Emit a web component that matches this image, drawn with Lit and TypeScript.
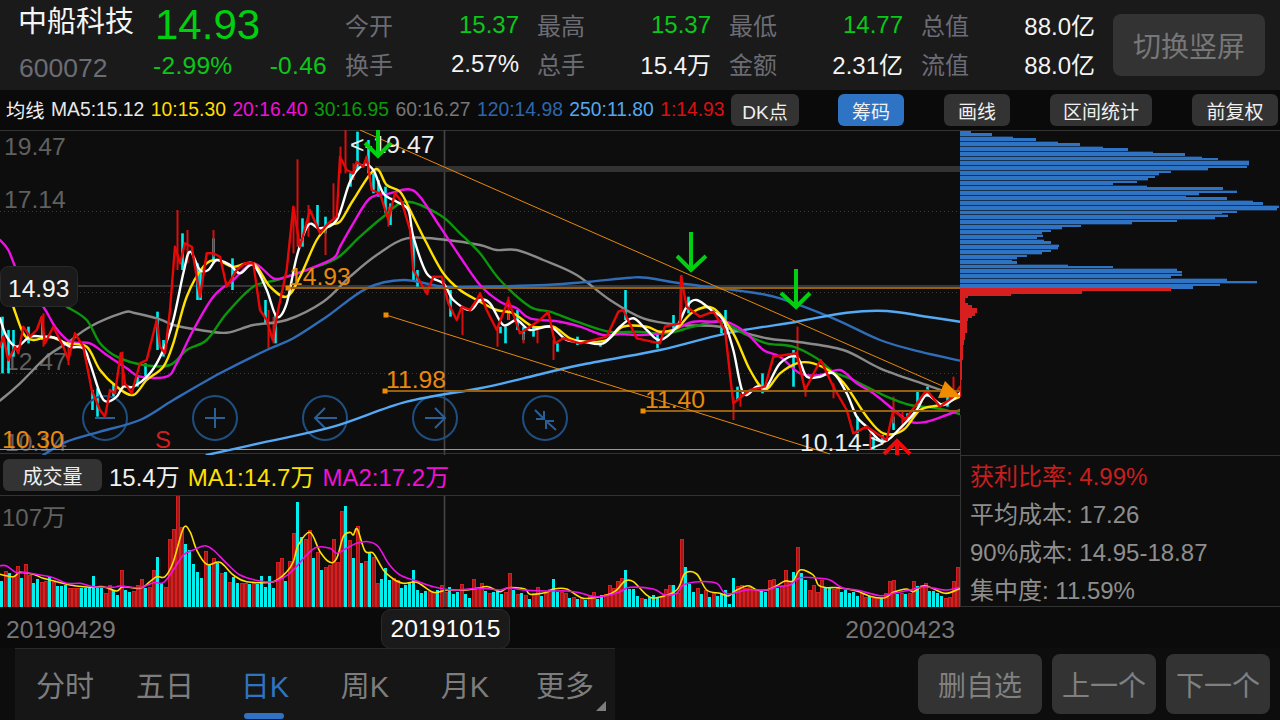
import { LitElement, html, css, svg, unsafeCSS } from "lit";
import { customElement } from "lit/decorators.js";

const FONT = unsafeCSS(`"Liberation Sans", "Noto Sans CJK SC", sans-serif`);

type P = [number, number];
const seg = (ox: number, oy: number, p: number[]): P[] => {
  const out: P[] = [];
  for (let i = 0; i < p.length; i += 2) out.push([ox + p[i] / 3, oy + p[i + 1] / 3]);
  return out;
};
const trace = (a: number[], b: number[], oy = 130): P[] => [...seg(0, oy, a), ...seg(480, oy, b)];
const jagged = (pts: P[]) => pts.map((p) => `${p[0].toFixed(1)},${p[1].toFixed(1)}`).join(" ");
// smooth moving-average curve through the traced points
const smooth = (pts: P[]) => {
  let d = `M${pts[0][0].toFixed(1)} ${pts[0][1].toFixed(1)}`;
  for (let i = 0; i < pts.length - 1; i++) {
    const p0 = pts[Math.max(0, i - 1)], p1 = pts[i], p2 = pts[i + 1], p3 = pts[Math.min(pts.length - 1, i + 2)];
    const c1x = p1[0] + (p2[0] - p0[0]) / 6, c1y = p1[1] + (p2[1] - p0[1]) / 6;
    const c2x = p2[0] - (p3[0] - p1[0]) / 6, c2y = p2[1] - (p3[1] - p1[1]) / 6;
    d += `C${c1x.toFixed(1)} ${c1y.toFixed(1)} ${c2x.toFixed(1)} ${c2y.toFixed(1)} ${p2[0].toFixed(1)} ${p2[1].toFixed(1)}`;
  }
  return d;
};

const MAGENTA = trace(
  [0,330,25,360,60,440,130,530,165,590,210,635,270,640,320,675,380,715,420,740,500,740,530,700,580,600,640,500,700,450,760,400,820,445,860,440,920,420,1000,385,1020,350,1060,280,1110,205,1170,190,1225,178,1260,200,1320,290,1380,380,1440,465],
  [60,515,110,535,150,565,240,575,300,590,370,615,420,612,480,615,540,610,590,595,640,575,700,575,740,575,800,610,850,660,900,680,960,730,1020,735,1080,720,1130,760,1180,790,1230,830,1290,875,1340,875,1400,855,1440,840]);
const WHITE = trace(
  [0,565,20,620,50,650,90,620,130,620,170,625,210,650,250,655,270,700,300,790,320,815,350,800,370,770,400,770,450,730,490,660,520,570,550,430,570,365,600,420,625,420,650,390,690,405,720,430,760,405,800,480,830,560,860,520,890,380,925,285,960,295,1010,270,1050,155,1090,105,1120,120,1150,190,1190,215,1225,240,1240,320,1280,430,1330,460,1360,510,1410,540,1440,510],
  [30,520,70,585,110,570,150,600,210,590,260,630,310,635,370,640,420,590,460,565,500,600,540,630,590,590,620,530,650,510,700,545,730,570,760,660,790,790,830,770,860,770,900,700,950,680,980,740,1020,740,1060,730,1100,790,1130,860,1160,890,1210,935,1260,895,1310,840,1340,795,1390,825,1440,790]);
const YELLOW = trace(
  [40,530,70,610,100,630,150,620,200,640,260,650,300,720,350,770,400,795,440,750,490,710,520,640,560,500,610,410,650,390,700,410,760,400,810,470,860,500,900,440,950,330,990,285,1020,275,1060,210,1125,118,1160,165,1200,185,1230,240,1280,340,1330,430,1380,480,1440,515],
  [50,540,100,550,160,590,220,590,270,625,320,635,380,630,430,590,500,590,540,605,590,595,640,545,700,535,760,610,810,720,855,778,900,730,950,700,1000,700,1060,730,1100,770,1160,860,1210,910,1270,900,1320,840,1380,825,1440,800]);
const GREEN = trace(
  [200,530,260,570,300,640,350,680,430,705,510,705,560,660,620,630,680,550,760,470,830,450,920,420,1010,385,1080,320,1150,260,1220,215,1320,255,1380,310,1440,370],
  [60,450,150,530,210,545,290,575,385,605,470,605,560,610,640,590,720,575,800,615,860,640,940,650,1010,685,1060,725,1120,750,1220,800,1290,825,1370,835,1440,852]);
const GRAY = trace(
  [0,812,60,760,140,680,200,640,270,590,370,548,400,548,480,568,520,585,600,600,680,608,760,585,860,570,970,515,1050,440,1130,375,1220,325,1340,330,1440,345],
  [50,360,110,360,190,390,290,435,390,510,490,565,600,585,720,590,860,625,950,635,1090,660,1200,715,1340,765,1440,800]);
const DBLUE = trace(
  [130,975,200,935,300,905,420,870,520,810,660,730,800,660,880,625,980,560,1100,475,1210,450,1330,470,1440,470],
  [200,465,330,455,450,443,500,443,600,460,800,485,900,505,1060,565,1200,630,1320,665,1440,692]);
const LBLUE = trace(
  [620,975,800,935,1000,890,1220,815,1440,775],
  [130,745,300,705,540,660,740,610,950,575,1100,548,1220,543,1340,560,1440,575]);
const RED = trace(
  [0,650,10,620,25,690,45,650,55,670,70,590,90,620,110,600,125,560,135,640,160,590,190,650,205,690,225,610,250,650,275,780,300,840,315,860,330,780,345,790,362,670,375,760,395,790,420,700,440,690,470,570,480,650,495,670,510,540,525,350,540,400,555,340,575,350,600,500,620,370,640,370,660,380,680,470,710,420,735,400,760,400,780,540,800,570,818,630,830,560,860,420,880,230,900,350,930,240,960,310,985,280,1010,260,1020,80,1040,120,1060,130,1070,95,1090,110,1100,80,1115,180,1140,190,1165,270,1185,190,1205,215,1230,300,1240,420,1280,490,1300,440,1325,440,1345,520,1370,570,1385,530,1410,540,1430,510,1440,490],
  [20,540,50,600,85,510,120,610,150,590,180,570,205,545,225,640,250,625,300,640,380,620,415,545,430,540,470,625,540,640,555,590,600,580,603,440,620,530,660,560,700,545,735,600,760,820,810,780,855,770,880,680,950,670,975,780,1022,690,1060,770,1100,840,1120,910,1160,890,1220,930,1240,840,1275,870,1340,780,1380,830,1420,800,1440,770]);

const CYAN_A = [5,560,730,25,600,730,40,600,680,85,590,640,125,570,630,275,780,840,290,775,860,340,760,800,410,740,770,435,700,740,470,545,660,490,630,680,545,310,420,590,400,510,600,420,510,640,325,400,695,385,480,795,510,580,825,555,640,905,265,350,950,225,290,975,260,310,1050,130,170,1070,5,120,1105,30,130,1120,130,190,1135,150,200,1155,170,250,1170,220,285,1240,320,450,1250,420,470,1350,480,560];
const CYAN_B = [60,590,610,75,590,640,85,540,570,110,540,600,130,590,630,160,590,620,230,640,665,290,620,645,360,640,650,435,480,570,530,610,655,580,555,600,625,500,550,735,540,610,722,570,610,770,770,810,845,730,790,940,660,770,1130,860,910,1180,920,960,1205,915,940,1240,860,900,1310,780,830,1340,770,800,1400,800,830,1280,850,870];
const WICK_A = [530,240,420,890,88,350,1035,0,130,365,665,780,805,540,655,820,560,640,975,300,375,1000,160,270,560,300,400,640,300,380,1385,530,615,1165,230,290,205,650,705,130,550,650,1280,470,495,880,230,370,925,225,320,1020,50,130,1060,100,150];
const WICK_B = [50,590,650,85,500,570,218,630,690,170,600,640,130,610,640,603,435,560,950,590,700,760,800,870,1060,760,805,1240,800,880,1265,840,900,1420,740,800,975,770,800,1170,900,960,780,790,830];

const sticks = (ox: number, p: number[], cls: string) => {
  const out = [];
  for (let i = 0; i < p.length; i += 3) {
    const x = Math.round(ox + p[i] / 3) + 0.5;
    out.push(svg`<line class=${cls} x1=${x} x2=${x} y1=${130 + p[i + 1] / 3} y2=${130 + p[i + 2] / 3}></line>`);
  }
  return out;
};

// volume bars: positive = red, negative = cyan, value = top in 3x zoom coordinates (base y 455)
const VOL = [
  -378,348,-355,362,332,-370,328,360,-384,-372,380,378,-365,382,-393,-393,-390,400,398,400,-400,-400,-400,-362,-395,-400,415,390,-405,-420,345,-405,-410,408,390,372,-400,395,345,-305,-385,395,252,222,120,215,-268,-285,-326,-350,-368,288,-328,308,-325,355,-350,380,-365,-384,385,385,-388,380,-388,-362,-395,-362,-400,322,308,-378,318,235,-140,-245,252,225,-308,290,-345,335,330,252,320,168,-153,255,-310,213,-325,318,-295,305,385,-372,-340,-375,370,375,-400,-390,-385,-345,-405,-415,-408,408,410,-405,390,410,-395,-418,-410,388,-418,-428,372,400,
  385,-408,415,-410,-405,-418,412,355,-405,418,-415,420,-432,415,397,-423,415,403,-372,-410,410,415,-430,425,-432,430,-435,420,412,-432,-420,418,390,400,378,370,-345,-402,-402,-423,430,-432,-425,-420,-430,425,402,390,-390,415,252,-336,-388,-412,400,-418,405,-425,415,-423,-418,-405,-447,-368,392,390,400,395,405,405,-405,-410,375,372,-398,392,345,378,-350,277,-353,-375,405,390,410,375,-400,-400,402,398,-410,-405,-413,-410,-422,415,425,-423,428,430,-430,415,378,375,-418,415,-417,415,378,-392,390,385,-408,-408,-415,-422,428,425,378,336];

const VY = trace(
  [0,358,40,365,60,352,100,358,130,370,170,380,210,390,270,397,310,395,350,408,370,395,420,400,450,380,470,365,495,365,520,320,550,220,570,230,590,285,620,328,660,322,700,360,740,380,820,380,860,350,880,320,895,270,930,232,960,290,990,322,1010,310,1030,245,1050,232,1060,240,1072,222,1095,288,1120,295,1150,345,1180,372,1210,385,1250,382,1300,412,1340,405,1400,405,1440,398],
  [25,395,60,410,85,398,135,402,150,418,200,412,220,402,260,402,310,430,380,420,410,405,435,378,460,380,500,420,530,428,590,405,615,355,650,357,680,405,720,415,745,423,770,405,805,392,830,405,860,405,890,392,915,378,940,378,960,345,1000,360,1015,390,1040,398,1075,398,1130,408,1175,425,1215,428,1240,412,1280,402,1300,410,1335,392,1395,415,1440,400],
  455);
const VM = trace(
  [0,332,20,333,50,353,80,353,120,360,160,368,200,385,240,385,280,395,340,397,360,393,420,398,460,383,490,383,520,345,550,300,580,285,615,272,640,285,680,325,720,360,780,378,820,380,850,368,880,345,920,300,950,277,990,280,1010,295,1040,280,1070,265,1105,260,1135,275,1165,325,1200,360,1250,378,1300,395,1360,405,1440,400],
  [60,405,85,398,130,405,200,408,260,408,300,413,340,425,380,422,420,410,450,397,520,402,555,420,590,415,610,390,660,380,710,385,730,410,750,417,800,405,860,405,890,395,930,390,960,368,1020,370,1050,375,1090,400,1130,405,1200,422,1240,415,1290,405,1335,395,1395,405,1440,397],
  455);

// chip distribution: row width in 3x zoom px
const ROW = 2.455;
const CHIP_BLUE = [32,95,160,228,293,360,430,503,578,675,725,773,866,866,860,745,632,598,585,565,530,460,560,790,830,717,678,802,880,910,957,950,830,787,805,765,652,515,362,307,273,245,248,232,252,272,296,293,272,245,200,170,157,170,325,458,650,665,667,633,802,890,780,700];
const CHIP_RED = [632,366,153,25,15,15,23,36,50,52,46,35,25,20,20,20,22,20,16,14,14,12,12,10,10,10,8,8,8,7,7,6,6,6,5,5,5,4,4,4,3,3,3,2];

const tickers = [
  ["MA5:15.12", "#e8e8e8"], ["10:15.30", "#ffdd00"], ["20:16.40", "#f010d8"], ["30:16.95", "#0b9a0b"],
  ["60:16.27", "#777777"], ["120:14.98", "#2d66ad"], ["250:11.80", "#55a8f0"], ["1:14.93", "#d81010"],
];
const stats = [
  ["今开", "15.37", "g"], ["最高", "15.37", "g"], ["最低", "14.77", "g"], ["总值", "88.0亿", "w"],
  ["换手", "2.57%", "w"], ["总手", "15.4万", "w"], ["金额", "2.31亿", "w"], ["流值", "88.0亿", "w"],
];
const tools = [["DK点", "w68"], ["筹码", "w66 on"], ["画线", "w66"], ["区间统计", "w102"], ["前复权", "w86"]];
const tabs = ["分时", "五日", "日K", "周K", "月K", "更多"];

@customElement("app-root")
export class AppRoot extends LitElement {
  static styles = css`
    :host { display: block; width: 1280px; height: 720px; background: #0d0d0d; overflow: hidden; font-family: ${FONT}; color: #fff; }
    .head { display: flex; height: 90px; background: #1a1a1a; padding-left: 18px; box-sizing: border-box; }
    .id { width: 137px; display: flex; flex-direction: column; }
    .name { font-size: 29px; line-height: 45px; height: 47px; color: #f4f4f4; }
    .code { font-size: 26.5px; line-height: 46px; color: #6c6c75; padding-left: 1px; }
    .quote { width: 174px; margin-left: -2px; margin-right: 18px; display: flex; flex-direction: column; }
    .price { font-size: 42px; line-height: 50px; height: 46px; color: #00d010; padding-left: 2px; }
    .chg { display: flex; justify-content: space-between; font-size: 24.5px; line-height: 40px; letter-spacing: 0.3px; color: #08c818; }
    .stats { display: grid; grid-template-columns: repeat(4, 174px); column-gap: 18px; grid-auto-rows: 39px; padding-top: 5px; }
    .stat { display: flex; justify-content: space-between; align-items: center; font-size: 24px; }
    .stat .l { color: #6c6c75; }
    .stat .g { color: #08c818; }
    .stat .w { color: #f4f4f4; }
    .flip { margin: 14px 0 0 18px; width: 152px; height: 62px; border-radius: 8px; background: #333; color: #777; font-size: 28px; display: flex; align-items: center; justify-content: center; }
    .ma { display: flex; align-items: center; height: 40px; background: #0a0a0a; padding: 0 3px 0 6px; font-size: 19.3px; gap: 6.5px; white-space: nowrap; }
    .ma .t { color: #f0f0f0; }
    .tools { margin-left: auto; display: flex; gap: 40px; }
    .tool { height: 32px; border-radius: 6px; background: #333; color: #f0f0f0; font-size: 19px; display: flex; align-items: center; justify-content: center; }
    .tool.w68 { width: 68px; margin-right: -1px; }
    .tool.w66 { width: 66px; }
    .tool.w102 { width: 102px; }
    .tool.w86 { width: 86px; }
    .tool.on { background: #2f74c4; }
    svg { display: block; }
    .chartrow { display: flex; height: 325px; }
    .volrow { display: flex; height: 152px; }
    .volcol { width: 960px; }
    .volhead { height: 40px; border-bottom: 1px solid #333; display: flex; align-items: center; padding-left: 3px; font-size: 24px; gap: 8px; white-space: nowrap; }
    .volbtn { width: 99px; height: 32px; background: #333; border-radius: 6px; color: #eee; font-size: 20px; display: flex; align-items: center; justify-content: center; margin-right: -1px; }
    .info { width: 320px; box-sizing: border-box; border: 1px solid #333; border-right: none; padding: 2px 0 0 9px; font-size: 24px; color: #8e8e8e; display: flex; flex-direction: column; }
    .info div { height: 38px; line-height: 38px; white-space: nowrap; }
    .info .r { color: #c81e1e; }
    .axis { position: relative; height: 41px; background: #0a0a0a; display: flex; justify-content: space-between; width: 960px; box-sizing: border-box; padding: 0 5px 0 6px; font-size: 24.7px; line-height: 46px; color: #777; }
    .axisrow { background: #0b0b0b; }
    .cursor { position: absolute; left: 381px; top: 2px; width: 129px; height: 40px; box-sizing: border-box; border: 1px solid #2a2a2a; border-radius: 10px; background: #1a1a1a; color: #fff; display: flex; align-items: center; justify-content: center; line-height: 1; }
    .bottom { display: flex; height: 72px; padding-left: 15px; background: #0d0d0d; }
    .tabs { display: grid; grid-template-columns: repeat(6, 100px); width: 600px; background: #161616; border-top: 1px solid #2a2a2a; box-sizing: border-box; }
    .tab { position: relative; text-align: center; font-size: 29px; line-height: 76px; color: #7d7d7d; }
    .tab.on { color: #2f74c4; }
    .tab.on::after { content: ""; position: absolute; left: 29px; width: 40px; bottom: 6px; height: 6px; border-radius: 3px; background: #2f74c4; }
    .more::after { content: ""; position: absolute; right: 9px; bottom: 14px; border-style: solid; border-width: 0 0 10px 10px; border-color: transparent transparent #7d7d7d transparent; }
    .acts { display: flex; gap: 10px; margin-left: 303px; padding-top: 6px; }
    .act { height: 60px; width: 104px; background: #333; border-radius: 8px; color: #808080; font-size: 28px; display: flex; align-items: center; justify-content: center; }
    .act.wide { width: 124px; }

    .grid { stroke: #3a3a3a; stroke-dasharray: 1 3; stroke-width: 1; }
    .top { stroke: #333; stroke-width: 2; }
    .cross { stroke: #454545; stroke-width: 1.6; }
    .ol { stroke: #96600e; stroke-width: 2; }
    .olt { stroke: #e8890c; stroke-width: 1; }
    .ax { fill: #606060; font-size: 24.7px; }
    .orng { fill: #e8890c; font-size: 24.7px; }
    .wt { fill: #eee; font-size: 24.7px; }
    .pl { fill: none; stroke-width: 2.4; stroke-linejoin: round; stroke-linecap: round; }
    .cy { stroke: #00eef0; stroke-width: 2.6; }
    .wk { stroke: #d80f0f; stroke-width: 2; }
    .gr { fill: none; stroke: #00d010; stroke-width: 4; }
    .rd { fill: none; stroke: #f00a0a; stroke-width: 4; }
    .circ { fill: none; stroke: #1f4f80; stroke-width: 2; }
    .ico { fill: none; stroke: #2a5f98; stroke-width: 2; }
    .vc { fill: #00f0f0; }
    .vr { fill: #a01818; stroke: #d81f1f; stroke-width: 1; shape-rendering: crispEdges; }
    .vl { fill: none; stroke-width: 1.6; stroke-linejoin: round; }
    .cb { fill: #2f74c4; shape-rendering: crispEdges; }
    .cr { fill: #d81f1f; shape-rendering: crispEdges; }
    .sep { stroke: #16304f; stroke-width: 1; shape-rendering: crispEdges; }
  `;

  private chart() {
    const ma = (p: P[], c: string) => svg`<path class="pl" d=${smooth(p)} stroke=${c}></path>`;
    const hl = (y: number, x1: number, cls: string) => svg`<line class=${cls} x1=${x1} x2="960" y1=${y} y2=${y}></line>`;
    return html`<svg width="960" height="325" viewBox="0 130 960 325">
      <line class="top" x1="0" x2="960" y1="130" y2="130"></line>
      ${[211.5, 292.5, 373.5].map((y) => svg`<line class="grid" x1="0" x2="960" y1=${y} y2=${y}></line>`)}
      <line class="cross" x1="0" x2="960" y1="286" y2="286"></line>
      <line class="cross" x1="444.5" x2="444.5" y1="130" y2="455"></line>
      <rect x="375" y="166" width="585" height="6" fill="#333"></rect>
      <line x1="0" x2="960" y1="453.5" y2="453.5" stroke="#333"></line>
      <text class="ax" x="4" y="155">19.47</text>
      <text class="ax" x="4" y="208">17.14</text>
      <text class="ax" x="5" y="370">12.47</text>
      <text class="ax" x="5" y="451">10.14</text>
      ${sticks(0, CYAN_A, "cy")}${sticks(480, CYAN_B, "cy")}
      ${sticks(0, WICK_A, "wk")}${sticks(480, WICK_B, "wk")}
      ${[105, 215, 325, 435, 545].map((x) => svg`<circle class="circ" cx=${x} cy="418" r="22"></circle>`)}
      <path class="ico" d="M95 418H115M205 418H225M215 408V428M315 418H337M325 408L315 418L325 428M425 418H445M435 408L445 418L435 428"></path>
      <path class="ico" d="M535 410L544 419M544 411V419H536M556 430L546 421M546 429V421H554"></path>
      ${ma(GRAY, "#8a8a8a")}${ma(DBLUE, "#2f6db8")}${ma(LBLUE, "#55aaf5")}
      ${ma(GREEN, "#0b960b")}${ma(MAGENTA, "#f010e8")}${ma(YELLOW, "#ffe000")}
      ${ma(WHITE, "#ffffff")}
      <polyline class="pl" points=${jagged(RED)} stroke="#e80808" stroke-linejoin="miter"></polyline>
      ${hl(288, 288, "ol")}${hl(391, 385, "ol")}${hl(411, 643, "ol")}${hl(449.5, 0, "olt")}
      <line class="olt" x1="360" y1="130" x2="947" y2="388"></line>
      <line class="olt" x1="386" y1="315" x2="830" y2="454"></line>
      ${[[288, 288], [386, 315], [385, 391], [643, 411]].map(([x, y]) => svg`<rect x=${x - 2.5} y=${y - 2.5} width="5" height="5" fill="#f08c00"></rect>`)}
      <polygon points="945,381 961,397 938,398" fill="#f08c00"></polygon>
      <text class="orng" x="289" y="285">14.93</text>
      <text class="orng" x="386" y="388">11.98</text>
      <text class="orng" x="645" y="408">11.40</text>
      <text class="orng" x="2" y="448">10.30</text>
      <text x="155" y="448" fill="#d02020" font-size="24">S</text>
      <text class="wt" x="350" y="153">&lt;-19.47</text>
      <text class="wt" x="800" y="451">10.14-&gt;</text>
      <path class="gr" d="M378 130V156M365 143L378 156L391 143M691 232V271M677 256L691 270L706 256M796 269V308M781 293L796 307L810 293"></path>
      <path class="rd" d="M897 455V440M884 454L897 441L910 454"></path>
      <rect x="0.5" y="266.5" width="77" height="40" rx="8" fill="#1a1a1a" stroke="#2a2a2a"></rect>
      <text x="8" y="297" fill="#f4f4f4" font-size="24.5">14.93</text>
    </svg>`;
  }

  private chips() {
    const rows = [];
    const seps = [];
    CHIP_BLUE.forEach((w, i) => rows.push(svg`<rect class="cb" x="0" y=${131 + i * ROW} width=${w / 3} height="3"></rect>`));
    CHIP_RED.forEach((w, i) => rows.push(svg`<rect class="cr" x="0" y=${131 + (i + 64) * ROW} width=${w / 3} height="3"></rect>`));
    for (let i = 2; i < 64; i += 2) {
      const w = Math.max(CHIP_BLUE[i - 1], CHIP_BLUE[i]) / 3;
      const y = Math.round(131 + i * ROW) + 0.5;
      seps.push(svg`<line class="sep" x1="0" x2=${w} y1=${y} y2=${y}></line>`);
    }
    return html`<svg width="320" height="325" viewBox="0 130 320 325">
      <line class="top" x1="0" x2="320" y1="130" y2="130"></line>
      ${rows}${seps}
      <line x1="0.5" x2="0.5" y1="415" y2="455" stroke="#333"></line>
    </svg>`;
  }

  private volume() {
    const base = 607;
    return html`<svg width="960" height="111" viewBox="0 496 960 111">
      ${VOL.map((v, i) => {
        const top = Math.round(455 + Math.abs(v) / 3);
        const x = i * 4;
        return v < 0
          ? svg`<rect class="vc" x=${x} y=${top} width="3" height=${base - top}></rect>`
          : svg`<rect class="vr" x=${x + 0.5} y=${top + 0.5} width="3" height=${base - top}></rect>`;
      })}
      <path class="vl" d=${smooth(VY)} stroke="#ffe000"></path>
      <path class="vl" d=${smooth(VM)} stroke="#f010e8"></path>
      <text x="2" y="526" fill="#606060" font-size="24">107万</text>
      <line x1="444.5" x2="444.5" y1="496" y2="607" stroke="#454545" stroke-width="1.6"></line>
    </svg>`;
  }

  render() {
    return html`
      <div class="head">
        <div class="id"><div class="name">中船科技</div><div class="code">600072</div></div>
        <div class="quote">
          <div class="price">14.93</div>
          <div class="chg"><span>-2.99%</span><span>-0.46</span></div>
        </div>
        <div class="stats">
          ${stats.map(([l, v, c]) => html`<div class="stat"><span class="l">${l}</span><span class=${c}>${v}</span></div>`)}
        </div>
        <div class="flip">切换竖屏</div>
      </div>
      <div class="ma">
        <span class="t">均线</span>
        ${tickers.map(([t, c]) => html`<span style="color:${c}">${t}</span>`)}
        <div class="tools">
          ${tools.map(([t, cl]) => html`<div class="tool ${cl}">${t}</div>`)}
        </div>
      </div>
      <div class="chartrow">${this.chart()}${this.chips()}</div>
      <div class="volrow">
        <div class="volcol">
          <div class="volhead">
            <div class="volbtn">成交量</div>
            <span style="color:#f0f0f0">15.4万</span>
            <span style="color:#ffe000">MA1:14.7万</span>
            <span style="color:#f010d8">MA2:17.2万</span>
          </div>
          ${this.volume()}
        </div>
        <div class="info">
          <div class="r">获利比率: 4.99%</div>
          <div>平均成本: 17.26</div>
          <div>90%成本: 14.95-18.87</div>
          <div>集中度: 11.59%</div>
        </div>
      </div>
      <div class="axisrow">
        <div class="axis">
          <span>20190429</span><span>20200423</span>
          <div class="cursor">20191015</div>
        </div>
      </div>
      <div class="bottom">
        <div class="tabs">
          ${tabs.map((t, i) => html`<div class="tab ${i === 2 ? "on" : ""} ${i === 5 ? "more" : ""}">${t}</div>`)}
        </div>
        <div class="acts">
          <div class="act wide">删自选</div><div class="act">上一个</div><div class="act">下一个</div>
        </div>
      </div>
    `;
  }
}
